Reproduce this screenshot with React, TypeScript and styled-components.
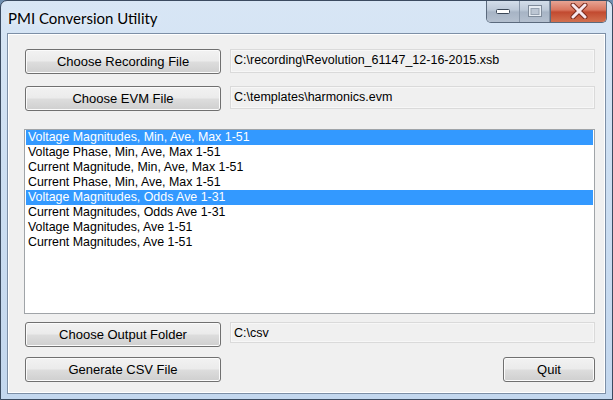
import React from "react";
import styled, { createGlobalStyle } from "styled-components";

const Global = createGlobalStyle`
  html, body { margin: 0; padding: 0; background: #6f8fb0; }
  * { box-sizing: border-box; }
`;

const Window = styled.div`
  width: 613px;
  height: 400px;
  display: flex;
  flex-direction: column;
  border: 1px solid #3b4b60;
  border-radius: 7px 7px 0 0;
  background: linear-gradient(180deg, #d8e6f5 0%, #cddff2 40%, #c3d7ee 100%);
  overflow: hidden;
  font-family: "Liberation Sans", Arial, sans-serif;
`;

const TitleBar = styled.div`
  height: 32px;
  display: flex;
  align-items: flex-start;
  justify-content: space-between;
  padding-left: 7px;
  flex: none;
`;

const Title = styled.div`
  font-family: Lato, "Open Sans", sans-serif;
  font-size: 15px;
  color: #000;
  padding-top: 8px;
  text-shadow: 0 0 6px rgba(255, 255, 255, 0.9);
`;

const Caption = styled.div`
  display: flex;
  margin-right: 5px;
  margin-top: -1px;
  height: 23px;
  border: 1px solid #5b6a7d;
  border-top: none;
  border-radius: 0 0 5px 5px;
  overflow: hidden;
`;

const CapBtn = styled.div<{ $w: number; $close?: boolean }>`
  width: ${(p) => p.$w}px;
  height: 100%;
  display: flex;
  align-items: center;
  justify-content: center;
  border-left: ${(p) => (p.$close ? "1px solid #5b6a7d" : "none")};
  border-right: ${(p) => (p.$close ? "none" : "1px solid #8896a8")};
  background: ${(p) =>
    p.$close
      ? "linear-gradient(180deg, #e8a99a 0%, #d9765f 45%, #c24a30 55%, #d2704f 100%)"
      : "linear-gradient(180deg, #d6e0ec 0%, #bdc9d8 45%, #a7b4c5 55%, #b4c0cf 100%)"};
  &:last-child {
    border-right: none;
  }
`;

const Client = styled.div`
  flex: 1;
  margin: 0 6px 7px 6px;
  border: 1px solid #7d8fa6;
  background: #f0f0f0;
  box-shadow: inset 0 0 0 1px #ffffff;
  padding: 15px 10px 11px 17px;
  display: flex;
  flex-direction: column;
`;

const Row = styled.div<{ $mt?: number }>`
  display: flex;
  align-items: flex-start;
  gap: 9px;
  margin-top: ${(p) => p.$mt ?? 0}px;
`;

const Button = styled.button<{ $w?: number }>`
  width: ${(p) => p.$w ?? 196}px;
  height: 25px;
  flex: none;
  border: 1px solid #707070;
  border-radius: 3px;
  background: linear-gradient(180deg, #f2f2f2 0%, #ebebeb 48%, #dddddd 52%, #cfcfcf 100%);
  box-shadow: inset 0 0 0 1px #fbfbfb;
  font-family: "Liberation Sans", Arial, sans-serif;
  font-size: 13px;
  color: #000;
  padding: 0;
  cursor: default;
`;

const Field = styled.div<{ $h?: number }>`
  flex: 1;
  height: ${(p) => p.$h ?? 24}px;
  border: 1px solid #dadada;
  box-shadow: inset 0 0 0 1px #f7f7f7;
  background: #f0f0f0;
  font-size: 12.5px;
  color: #000;
  padding: 3px 0 0 3px;
  white-space: nowrap;
`;

const List = styled.div`
  margin-top: 18px;
  margin-left: -1px;
  height: 185px;
  border: 1px solid #a0a4a8;
  background: #fff;
  padding: 0 1px 1px 1px;
  display: flex;
  flex-direction: column;
`;

const Item = styled.div<{ $sel?: boolean }>`
  height: 15px;
  line-height: 15px;
  font-size: 12.4px;
  padding-left: 2px;
  white-space: nowrap;
  color: ${(p) => (p.$sel ? "#fff" : "#000")};
  background: ${(p) => (p.$sel ? "#3399ff" : "transparent")};
`;

const Spacer = styled.div`
  flex: 1;
`;

const items = [
  { t: "Voltage Magnitudes, Min, Ave, Max 1-51", s: true },
  { t: "Voltage Phase, Min, Ave, Max 1-51" },
  { t: "Current Magnitude, Min, Ave, Max 1-51" },
  { t: "Current Phase, Min, Ave, Max 1-51" },
  { t: "Voltage Magnitudes, Odds Ave 1-31", s: true },
  { t: "Current Magnitudes, Odds Ave 1-31" },
  { t: "Voltage Magnitudes, Ave 1-51" },
  { t: "Current Magnitudes, Ave 1-51" },
];

export default function App() {
  return (
    <>
      <Global />
      <Window>
        <TitleBar>
          <Title>PMI Conversion Utility</Title>
          <Caption>
            <CapBtn $w={33}>
              <svg width="14" height="6" viewBox="0 0 14 6">
                <rect x="0.5" y="1.5" width="13" height="4" rx="1" fill="#fff" stroke="#3a4656" />
              </svg>
            </CapBtn>
            <CapBtn $w={30}>
              <svg width="14" height="12" viewBox="0 0 14 12">
                <rect x="0.5" y="0.5" width="13" height="11" fill="#e6ecf3" stroke="#7f8b9a" />
                <rect x="3" y="3.5" width="8" height="6" fill="#bcc6d3" stroke="#95a1b0" />
              </svg>
            </CapBtn>
            <CapBtn $w={56} $close>
              <svg width="18" height="16" viewBox="0 0 18 16">
                <path d="M3 2 L15 14 M15 2 L3 14" stroke="#7a2a1d" strokeWidth="5" strokeLinecap="round" />
                <path d="M3 2 L15 14 M15 2 L3 14" stroke="#f6e8ef" strokeWidth="3" strokeLinecap="round" />
              </svg>
            </CapBtn>
          </Caption>
        </TitleBar>
        <Client>
          <Row>
            <Button>Choose Recording File</Button>
            <Field>C:\recording\Revolution_61147_12-16-2015.xsb</Field>
          </Row>
          <Row $mt={12}>
            <Button>Choose EVM File</Button>
            <Field $h={23}>C:\templates\harmonics.evm</Field>
          </Row>
          <List>
            {items.map((i) => (
              <Item key={i.t} $sel={i.s}>
                {i.t}
              </Item>
            ))}
          </List>
          <Row $mt={8}>
            <Button $w={196}>Choose Output Folder</Button>
            <Field $h={21}>C:\csv</Field>
          </Row>
          <Row $mt={10}>
            <Button>Generate CSV File</Button>
            <Spacer />
            <Button $w={92}>Quit</Button>
          </Row>
        </Client>
      </Window>
    </>
  );
}
